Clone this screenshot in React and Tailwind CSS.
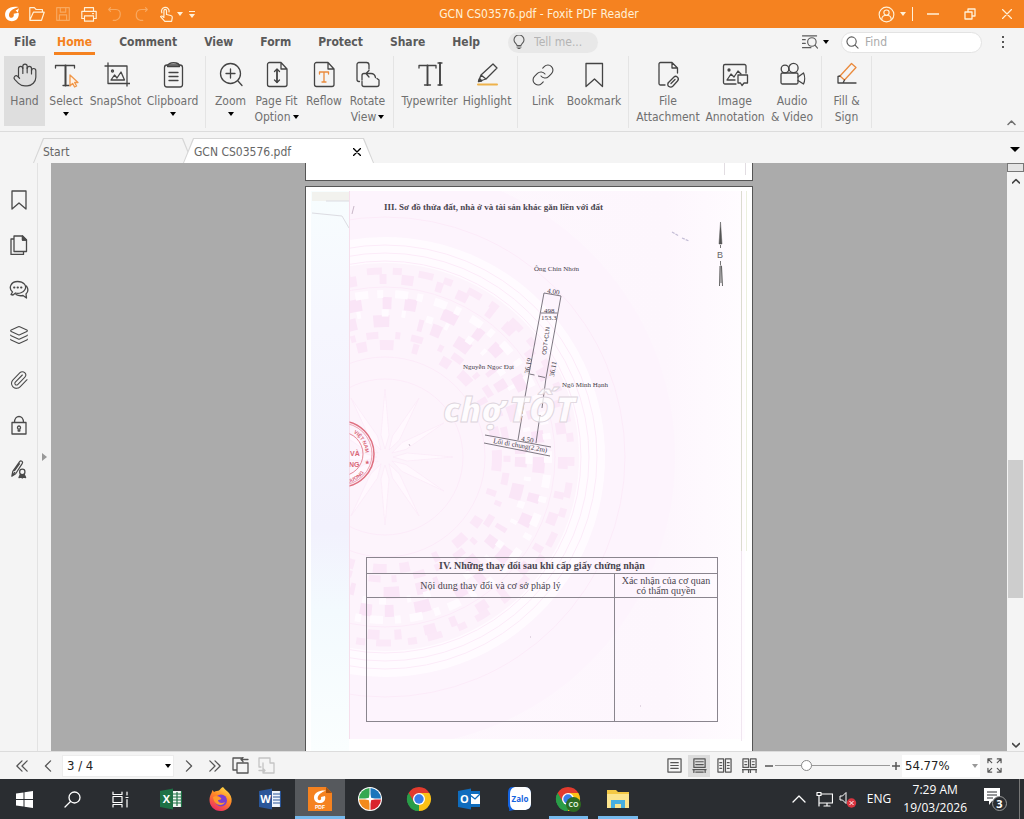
import { useState } from 'react';
import clsx from 'clsx';
import { Hand, Link as LinkIcon, Paperclip, Layers } from 'lucide-react';

function Icon({ size = 28, box = 28, width = 1.3, className, children }) {
  return (
    <svg width={size} height={size} viewBox={`0 0 ${box} ${box}`} fill="none" stroke="currentColor" strokeWidth={width} strokeLinecap="round" strokeLinejoin="round" className={clsx('shrink-0', className)} aria-hidden="true">
      {children}
    </svg>
  );
}

function Caret({ className }) {
  return (
    <svg width="6" height="4" viewBox="0 0 6 4" className={clsx('shrink-0', className)} fill="currentColor" aria-hidden="true">
      <path d="M0 0h6L3 4z" />
    </svg>
  );
}

/* ---------- title bar ---------- */

function FoxitMark({ className, size = 18 }) {
  return (
    <svg width={size} height={size} viewBox="0 0 18 18" fill="currentColor" className={className} aria-hidden="true">
      <path d="M16.5 1.2C12 .2 6.500.6 3.200 4.200.4 7.500.6 12.600 3.600 15.200c3.400 2.900 9 2.200 11.500-1.200 1.500-2.100 1.800-4.600 1.300-6.500l-5.600 1.200c.6 1.700.2 3.600-1.300 4.300-1.900.9-4-.4-3.900-2.800.2-4 4.200-7 10.900-9z" />
      <path d="M13 4.500c1.200.2 2.500-.6 3.600-2.300-.2 2.300-.6 4-1.300 5.300z" />
    </svg>
  );
}

const quickTools = [
  { name: 'Open', art: <path d="M2 17V3h5l2 2h7v3M2 17h13l3-9H6L2 17z" /> },
  { name: 'Save', faded: true, art: <path d="M3 3h14v14H3zM7 3v5h6V3M6 17v-6h8v6" /> },
  { name: 'Print', art: <path d="M5 7V3h10v4M5 15H2V7h16v8h-3M5 12h10v6H5zM14 9.500h1" /> },
  { name: 'Undo', faded: true, art: <path d="M5 3l-2 2 2 2M3 5h8c7 0 6 10 0 12H8" /> },
  { name: 'Redo', faded: true, art: <path d="M15 3l2 2-2 2M17 5h-6C3 5 3 15 9 17h3" /> },
];

function TitleBar() {
  return (
    <header className="flex h-7 shrink-0 items-center bg-[#f58220] text-[#fff1d8]">
      <div className="flex w-[200px] items-center pl-1">
        <FoxitMark size={16} className="mr-2 text-white" />
        {quickTools.map((tool) => (
          <button key={tool.name} aria-label={tool.name} className={clsx('mr-2', tool.faded && 'opacity-35')}>
            <Icon size={18} box={20} width={1.3}>{tool.art}</Icon>
          </button>
        ))}
        <button aria-label="Touch mode" className="flex items-center gap-[2px]">
          <Icon size={17} box={20} width={1.4}>
            <path d="M7 12V5.500a1.500 1.500 0 0 1 3 0V10l5 1.200c1.500.4 2 1.300 1.800 2.500L16 18H8l-5-5.500c.8-1.200 2-1 4 1M4.500 8A4.500 4.500 0 1 1 13 7" />
          </Icon>
          <Caret />
        </button>
        <button aria-label="Customize toolbar" className="ml-[6px] flex flex-col items-center gap-[2px]">
          <span className="h-px w-[6px] bg-current" />
          <Caret />
        </button>
      </div>
      <h1 className="flex-1 text-center text-xs">GCN CS03576.pdf - Foxit PDF Reader</h1>
      <div className="flex w-[146px] items-center justify-between pr-3">
        <button aria-label="Account" className="flex items-center gap-[5px]">
          <Icon size={17} box={18} width={1.2}>
            <circle cx="9" cy="9" r="7.800" />
            <circle cx="9" cy="7" r="2.800" />
            <path d="M4 14.500c0-3 2-4.500 3.500-4.500h3c1.500 0 3.500 1.500 3.500 4.500" />
          </Icon>
          <Caret />
        </button>
        <span className="-ml-2 h-[14px] w-px bg-current" />
        <button aria-label="Minimize"><Icon size={12} box={12} width={1.3}><path d="M0 6h12" /></Icon></button>
        <button aria-label="Restore" className="ml-3"><Icon size={12} box={12} width={1.3}><path d="M1 4h7v7H1zM4 4V1h7v7H8" /></Icon></button>
        <button aria-label="Close" className="ml-3"><Icon size={10} box={10} width={1.2}><path d="M.5.5l9 9M9.500.5l-9 9" /></Icon></button>
      </div>
    </header>
  );
}

/* ---------- menu row ---------- */

const menus = ['File', 'Home', 'Comment', 'View', 'Form', 'Protect', 'Share', 'Help'];

function MenuBar() {
  return (
    <nav className="flex h-7 shrink-0 items-center pl-[11px] text-[#5a5a5a]">
      {menus.map((menu) => (
        <button key={menu} className={clsx('border-b-[3px] px-[3px] pt-[3px] text-xs font-bold leading-5', menu === 'File' ? 'mr-[15px]' : 'mr-[21px]', menu === 'Home' ? 'border-[#f58220] text-[#f58220]' : 'border-transparent')}>
          {menu}
        </button>
      ))}
      <label className="ml-1 flex h-[21px] w-[90px] items-center gap-2 rounded-full bg-[#e8e8e8] pl-1">
        <Icon size={14} box={14} width={1.1}>
          <path d="M5 10.500C5 9 2 8 2 5a5 5 0 0 1 10 0c0 3-3 4-3 5.500zM5 12h4M6 13.500h2" />
        </Icon>
        <input aria-label="Tell me" placeholder="Tell me..." className="w-full min-w-0 bg-transparent text-xs outline-none placeholder:text-[#b4b4b4]" />
      </label>
      <div className="ml-auto flex items-center">
        <button aria-label="Search options" className="mr-3 flex items-center gap-[5px]">
          <Icon size={16} box={17} width={1.2}>
            <path d="M.5 2h15M.5 6h3M.5 10h3M.5 14.500h9M14 12l2.500 3" />
            <circle cx="10.500" cy="8.500" r="4.500" />
          </Icon>
          <Caret className="text-black" />
        </button>
        <label className="flex h-[21px] w-[141px] items-center gap-[6px] rounded-full border border-[#e3e3e3] bg-white pl-1">
          <Icon size={13} box={14} width={1.200}>
            <circle cx="6" cy="6" r="5" />
            <path d="M9.800 9.800l3.200 3.200" />
          </Icon>
          <input aria-label="Find" placeholder="Find" className="w-full min-w-0 bg-transparent text-xs outline-none placeholder:text-[#aaa]" />
        </label>
        <button aria-label="More" className="mx-[18px] flex w-[6px] flex-col items-center gap-[3px]">
          <span className="h-[2px] w-[2px] bg-[#555]" />
          <span className="h-[2px] w-[2px] bg-[#555]" />
          <span className="h-[2px] w-[2px] bg-[#555]" />
        </button>
      </div>
    </nav>
  );
}

/* ---------- ribbon ---------- */

const pageWithFold = 'M18 1.500H6.500a2 2 0 0 0-2 2v20a2 2 0 0 0 2 2h15.500a2 2 0 0 0 2-2V8zM18 1.500V8h6';

const ribbon = [
  [
    { name: 'Hand', w: 'w-[41px]', active: true, icon: <Hand size={26} strokeWidth={1.1} className="my-px" /> },
    {
      name: 'Select', w: 'w-[42px]', caret: true,
      icon: (
        <Icon>
          <path d="M3.500 7V4.500h19V7M11 24.500h6" />
          <path d="M13.500 4.500v20" strokeWidth="2" />
          <path d="M18 14v11l2.600-2.600 2 3.600 2-1-2-3.500H26z" stroke="#f0974a" fill="#fff3e6" />
        </Icon>
      ),
    },
    {
      name: 'SnapShot', w: 'w-[57px]',
      icon: (
        <Icon>
          <path d="M3 5h22v20M6 2v20.500h22M9 19l3.500-5 2.500 3 4-6 3.500 8z" />
          <circle cx="10.500" cy="10" r="1" />
        </Icon>
      ),
    },
    {
      name: 'Clipboard', w: 'w-[57px]', caret: true,
      icon: (
        <Icon>
          <rect x="5.500" y="4" width="18" height="22" rx="2.500" />
          <path d="M8.500 5.500c0-5 12-5 12 0zM10 11.500h9M10 15.500h9M10 19.500h9" />
        </Icon>
      ),
    },
  ],
  [
    {
      name: 'Zoom', w: 'w-[41px]', caret: true,
      icon: (
        <Icon>
          <circle cx="13.500" cy="12.500" r="10" />
          <path d="M21 20l4 4.500M9 12.500h9M13.500 8v9" />
        </Icon>
      ),
    },
    {
      name: 'Page Fit', second: 'Option', w: 'w-[51px]', caretInline: true,
      icon: (
        <Icon>
          <path d={pageWithFold} />
          <path d="M14 9v12" strokeWidth="1.800" />
          <path d="M11.500 10.500L14 8l2.500 2.500M11.500 19l2.500 2.500 2.500-2.500" />
        </Icon>
      ),
    },
    {
      name: 'Reflow', w: 'w-[44px]',
      icon: (
        <Icon>
          <path d={pageWithFold} />
          <path d="M9.500 13v-2h9v2M14 11v10M12 21h4" stroke="#ea8a3c" />
        </Icon>
      ),
    },
    {
      name: 'Rotate', second: 'View', w: 'w-[43px]', caretInline: true,
      icon: (
        <Icon>
          <path d="M5.500 20.500H5a2 2 0 0 1-2-2V3.500a2 2 0 0 1 2-2h7.500c1.500 0 2.500 1 2.500 2.500v4" />
          <path d="M8 20.500v3a2 2 0 0 0 2 2h13a2 2 0 0 0 2-2V19l-2-1.500M8 19v-4.500a2 2 0 0 1 2-2h3M15 9.500l-3 3 3 3.500M12 12.500h5c3 0 4 1.500 4.500 4" />
        </Icon>
      ),
    },
  ],
  [
    {
      name: 'Typewriter', w: 'w-[63px]',
      icon: (
        <Icon>
          <path d="M3 7V4.500h17V7M8.500 24h6M22 2h4M22 24h4" />
          <path d="M11.500 4.500V24M24 2v22" strokeWidth="1.900" />
        </Icon>
      ),
    },
    {
      name: 'Highlight', w: 'w-[52px]',
      icon: (
        <Icon>
          <path d="M20 3l4 4L13 18l-5-4zM8 14l-2.500 6.500L13 18M6 19l3 .5" />
          <path d="M5.500 20.500l1-3 2 2.500z" fill="currentColor" />
          <path d="M5 23.500h19" stroke="#eeb24b" strokeWidth="2" />
        </Icon>
      ),
    },
  ],
  [
    { name: 'Link', w: 'w-[42px]', icon: <LinkIcon size={24} strokeWidth={1.1} className="my-[2px]" /> },
    { name: 'Bookmark', w: 'w-[60px]', icon: <Icon><path d="M6 2.500h16.500v23L14.500 18 6 25.500z" /></Icon> },
  ],
  [
    {
      name: 'File', second: 'Attachment', w: 'w-[70px]',
      icon: (
        <Icon>
          <path d="M11 24H6.500a1.500 1.500 0 0 1-1.500-1.500V3a1.500 1.500 0 0 1 1.500-1.500H18l5.500 5.500v5M18 1.500V7h5.500" />
          <path d="M14 22l6-6c2-2 6 1 3.500 4l-4.500 5c-2.500 2.500-7 0-4.500-3.500zM17 22.500l4-4" />
        </Icon>
      ),
    },
    {
      name: 'Image', second: 'Annotation', w: 'w-[64px]',
      icon: (
        <Icon>
          <path d="M15 23H4a1.500 1.500 0 0 1-1.500-1.500V5A1.500 1.500 0 0 1 4 3.500h19.500A1.500 1.500 0 0 1 25 5v7M6 19l4-6 3 3 4-6 3 3M6 19h8" />
          <circle cx="8" cy="9" r="1" fill="currentColor" />
          <path d="M17 14h9.500v8H23l-2 2.500L19.500 22H17z" />
        </Icon>
      ),
    },
    {
      name: 'Audio', second: '& Video', w: 'w-[50px]',
      icon: (
        <Icon>
          <circle cx="7" cy="8" r="3.800" />
          <circle cx="15.500" cy="7" r="4.600" />
          <rect x="3" y="12" width="17" height="11" rx="1.500" />
          <path d="M20 16l5.500-4c1.500 3 1.500 8 0 11L20 19.500" />
        </Icon>
      ),
    },
  ],
  [
    {
      name: 'Fill &', second: 'Sign', w: 'w-[41px]',
      icon: (
        <Icon>
          <path d="M18.500 2.500l4.500 4L11.500 19 7 15z" stroke="#ea8a3c" />
          <path d="M7 15l-2 .5V22h5l1.500-3M5 22h18" />
        </Icon>
      ),
    },
  ],
];

function RibbonButton({ item }) {
  return (
    <button className={clsx('flex h-[70px] flex-col items-center pt-[5px]', item.w, item.active && 'bg-[#dedede]')}>
      <span className="text-[#444]">{item.icon}</span>
      <span className="mt-1 whitespace-nowrap text-xs leading-4">{item.name}</span>
      {item.caret && <Caret className="mt-[3px] text-black" />}
      {item.second && (
        <span className="flex items-center gap-[2px] whitespace-nowrap text-xs leading-4">
          {item.second}
          {item.caretInline && <Caret className="text-black" />}
        </span>
      )}
    </button>
  );
}

function Ribbon() {
  return (
    <div className="flex h-[76px] shrink-0 items-start border-b border-[#dcdcdc] text-[#707070]">
      {ribbon.map((group) => (
        <div key={group[0].name} className="flex h-[72px] border-r border-[#e4e4e4] px-1">
          {group.map((item) => <RibbonButton key={item.name} item={item} />)}
        </div>
      ))}
      <button aria-label="Collapse ribbon" className="ml-auto mr-2 self-end pb-1">
        <Icon size={9} box={9} width={1.500}><path d="M1 6.500L4.500 3 8 6.500" /></Icon>
      </button>
    </div>
  );
}

/* ---------- document tabs ---------- */

const slant = '[clip-path:polygon(10px_0,calc(100%-10px)_0,100%_100%,0_100%)]';

function DocumentTabs() {
  return (
    <div className="flex h-[31px] shrink-0 items-end justify-between pl-[33px] text-xs text-[#666]">
      <div className="flex h-[25px]">
        <div className={clsx('w-[160px] bg-[#d6d6d6] px-px pt-px', slant)}>
          <button className={clsx('h-full w-full bg-[#f4f4f4] pl-[9px] pt-[2px] text-left', slant)}>Start</button>
        </div>
        <div className={clsx('-ml-[10px] w-[191px] bg-[#d6d6d6] px-px pt-px', slant)}>
          <div className={clsx('flex h-full items-center justify-between bg-white pl-[10px] pr-3 pt-[2px]', slant)}>
            <button>GCN CS03576.pdf</button>
            <button aria-label="Close tab" className="text-black">
              <Icon size={8} box={8} width={1.400}><path d="M.5.5l7 7M7.500.5l-7 7" /></Icon>
            </button>
          </div>
        </div>
      </div>
      <button aria-label="Tab list" className="self-center pr-1 pt-1 text-black">
        <svg width="10" height="5" viewBox="0 0 10 5" fill="currentColor"><path d="M0 0h10L5 5z" /></svg>
      </button>
    </div>
  );
}

/* ---------- side panel ---------- */

const panels = [
  { name: 'Bookmarks', icon: <Icon size={20} box={20}><path d="M3 1h14v18l-7-6-7 6z" /></Icon> },
  {
    name: 'Pages',
    icon: (
      <Icon size={20} box={20}>
        <path d="M5 1h8.500l4 4v11.500H5zM13.500 1v4h4M5 4H2v15.500h12.500v-3" />
        <path d="M13.500 1v4h4z" fill="currentColor" />
      </Icon>
    ),
  },
  {
    name: 'Comments',
    icon: (
      <Icon size={20} box={20}>
        <path d="M2 14.500l1.500-2.500C-1 8 2 1.500 8.500 1.500S18 6 16 9.500c-1.500 3-6 4.500-9.500 3.500L4 15zM17.500 6c2 3 1.500 6-.5 8l.5 4-3.500-2.500c-2.500.5-5 .2-7-1" />
        <path d="M5 7.500h.5M8.500 7.500h.5M12 7.500h.5" strokeWidth="1.800" />
      </Icon>
    ),
  },
  { name: 'Layers', icon: <Layers size={20} strokeWidth={1.3} /> },
  { name: 'Attachments', icon: <Paperclip size={20} strokeWidth={1.3} /> },
  {
    name: 'Security',
    icon: (
      <Icon size={20} box={20}>
        <path d="M3 7.500h14v11.500H3zM5.500 7.500c0-8 9-8 9 0" />
        <path d="M10 11a1.500 1.500 0 0 1 .8 2.800V16H9.200v-2.200A1.500 1.500 0 0 1 10 11z" />
      </Icon>
    ),
  },
  {
    name: 'Signatures',
    icon: (
      <Icon size={19} box={20}>
        <path d="M3 17l1-5L11 2c1.500-2 4-.5 3 1.500L7 14.500zM6 11l5-7M3 17l3-4" />
        <circle cx="14" cy="12.500" r="2.800" />
        <path d="M12 15l-1.500 3.500 2-.5 1.500 1 1.500-1 2 .5L16 15" fill="currentColor" />
      </Icon>
    ),
  },
];

function SidePanel() {
  return (
    <>
      <aside className="flex w-[38px] shrink-0 flex-col border-r border-[#e2e2e2] pt-[14px] text-[#4a4a4a]">
        {panels.map((panel) => (
          <button key={panel.name} aria-label={panel.name} className="flex h-[45px] items-center justify-center">{panel.icon}</button>
        ))}
      </aside>
      <button aria-label="Expand panel" className="flex w-[13px] shrink-0 items-center justify-center text-[#999]">
        <svg width="5" height="8" viewBox="0 0 5 8" fill="currentColor"><path d="M0 0v8l5-4z" /></svg>
      </button>
    </>
  );
}

/* ---------- scanned page ---------- */

const rays = Array.from({ length: 12 }, (_, i) => i * 30);

// each ring of the drum: radius, thickness, dash rhythm, colour
const drums = [
  [112, 10, '14 19 6 25 10 13', '#fbe8f8'],
  [122, 7, '5 11 12 17', '#fbe8f8'],
  [136, 12, '10 17 16 29 5 9', '#fae6f7'],
  [144, 7, '7 13 4 21', '#fffbff'],
  [154, 12, '16 21 9 13 12 27', '#fae5f7'],
  [163, 8, '6 12 13 9', '#fffbff'],
  [178, 10, '12 23 7 15', '#fbe8f8'],
  [186, 7, '9 17 15 11', '#fbe9f8'],
];

// faint bronze-drum rosette printed under the certificate
function Rosette() {
  return (
    <g clipPath="url(#sheet)">
      <circle cx="385" cy="458" r="290" fill="#fdf4fd" />
      <circle cx="385" cy="458" r="220" fill="#fffbff" />
      <circle cx="385" cy="458" r="194" fill="#fdf4fc" />
      <g fill="none" stroke="#fcebf9" strokeWidth="1">
        <circle cx="385" cy="458" r="240" />
        <circle cx="385" cy="458" r="212" />
        <circle cx="385" cy="458" r="204" />
        <circle cx="385" cy="458" r="196" />
        <circle cx="385" cy="458" r="170" />
        <circle cx="385" cy="458" r="100" />
        <circle cx="385" cy="458" r="78" />
      </g>
      {drums.map(([r, thickness, dash, color]) => (
        <circle key={r} cx="385" cy="458" r={r} fill="none" stroke={color} strokeWidth={thickness} strokeDasharray={dash} />
      ))}
      {rays.map((angle) => (
        <path key={angle} d="M385 450l-4-14 4-46 4 46z" fill="#fff8fe" stroke="#fbeaf8" strokeWidth="0.700" transform={`rotate(${angle} 385 458)`} />
      ))}
    </g>
  );
}

function Stamp() {
  return (
    <g clipPath="url(#sheet)" fill="none" stroke="#df7080">
      <circle cx="341" cy="455" r="33" strokeWidth="1.500" />
      <circle cx="341" cy="455" r="31" strokeWidth="0.600" />
      <circle cx="341" cy="455" r="22" strokeWidth="0.800" />
      <path id="stampTop" d="M341 430.500a24.500 24.500 0 0 1 24.500 24.500" stroke="none" />
      <path id="stampBottom" d="M346 484.500a30 30 0 0 0 23-20" stroke="none" />
      <g fill="#d96475" stroke="none" fontFamily="Liberation Sans, sans-serif" fontWeight="bold">
        <text fontSize="5"><textPath href="#stampTop" startOffset="13">VIỆT NAM</textPath></text>
        <text fontSize="5"><textPath href="#stampBottom" startOffset="2">DƯƠNG</textPath></text>
        <text x="350" y="457" fontSize="7">VÀ</text>
        <text x="349" y="468" fontSize="7">NG</text>
        <text x="365" y="465" fontSize="5">★</text>
      </g>
    </g>
  );
}

function ScanDrawing() {
  return (
    <svg viewBox="306 188 446 600" width="446" height="600" className="col-start-1 row-start-1" role="img" aria-label="Sơ đồ thửa đất">
      <defs>
        <clipPath id="sheet"><rect x="349.500" y="192" width="395" height="548" /></clipPath>
        <linearGradient id="strip" x1="0" y1="0" x2="0" y2="1">
          <stop offset="0" stopColor="#f7fdfe" />
          <stop offset="0.250" stopColor="#f6f6fe" />
          <stop offset="0.600" stopColor="#f2f1fd" />
          <stop offset="0.750" stopColor="#f3fafe" />
          <stop offset="1" stopColor="#fafefe" />
        </linearGradient>
        <linearGradient id="paper" x1="0" y1="0" x2="1" y2="0">
          <stop offset="0" stopColor="#fef8fe" />
          <stop offset="0.800" stopColor="#fdf6fd" />
          <stop offset="1" stopColor="#fffcff" />
        </linearGradient>
      </defs>
      <rect x="311" y="192" width="38" height="560" fill="url(#strip)" />
      <rect x="312" y="193" width="37" height="9" fill="#f2f2ee" />
      <path d="M326 202h23M312 214l30 3 7 12" stroke="#dcdce2" fill="none" />
      <rect x="349" y="192" width="396" height="548" fill="url(#paper)" />
      <Rosette />
      <path d="M349.500 192v548" stroke="#f6dfec" />
      <path d="M741.500 192v360" stroke="#dcdcd0" />
      <path d="M746.500 192v360" stroke="#ecefdf" />
      <path d="M741.500 552v190" stroke="#f0e6f0" />
      <Stamp />

      {/* north arrow */}
      <g stroke="#555" fill="#555">
        <path d="M720.500 223l1.500 22h-3z" strokeWidth="0.500" />
        <path d="M720.500 246v3M720.500 262v4" strokeWidth="0.800" />
        <path d="M719.500 287l.5-20h1.500l1 20M721 268v16" fill="none" strokeWidth="0.900" />
      </g>
      <text x="717" y="259" fontSize="9" fill="#666" fontFamily="Liberation Sans, sans-serif">B</text>
      <path d="M672 233l7 4M682 239l7 3" stroke="#c4bdd6" strokeWidth="1.300" strokeDasharray="3 1" />
      <path d="M409 445l1 2M530 638h1M640 707h1M352 215l2-8" stroke="#c9b8c9" />

      {/* the plot itself */}
      <g stroke="#6f6a74" strokeWidth="0.900" fill="none">
        <path d="M544 294l17 3-15 82M544 294l-15 81-7 40M518 441l4-24M536 444l4-28M546 379l-4 30M541 314h16.500M529.500 375l5 1M538 377l7 1.500" />
        <path d="M485 436l66 12M484 444l66 13" />
      </g>

      {/* watermark */}
      <g fill="#fff" fillOpacity="0.750" stroke="#ddd5dd" strokeWidth="0.900" fontFamily="Open Sans, sans-serif" fontWeight="800" fontStyle="italic">
        <text x="443" y="423" fontSize="34">chợ</text>
        <text x="509" y="423" fontSize="36">TỐT</text>
      </g>

      <g fill="#45404a" fontFamily="Liberation Serif, serif" fontSize="7">
        <text x="534" y="272">Ông Chín Nhơn</text>
        <text x="463" y="370">Nguyễn Ngọc Đạt</text>
        <text x="562" y="388">Ngô Minh Hạnh</text>
        <text x="547" y="294" transform="rotate(8 547 294)" fontSize="7">4.00</text>
        <text x="544" y="314">498</text>
        <text x="541" y="321">153.3</text>
        <text transform="translate(546 356) rotate(-82)" fontFamily="Liberation Sans, sans-serif" fontSize="6">ODT+CLN</text>
        <text transform="translate(529 375) rotate(-80)" fontSize="7">36.19</text>
        <text transform="translate(554 378) rotate(-80)" fontSize="7">36.11</text>
        <text x="521" y="442" transform="rotate(8 521 442)" fontSize="7">4.50</text>
        <text x="493" y="444" transform="rotate(10 493 444)">Lối đi chung(2.2m)</text>
      </g>
    </svg>
  );
}

function ScannedPage() {
  return (
    <article className="grid w-[448px] shrink-0 border border-[#555] bg-white font-['Liberation_Serif',serif] text-[#4a4650]">
      <ScanDrawing />
      <div className="col-start-1 row-start-1 flex flex-col pl-[60px] pr-[34px]">
        <h2 className="ml-[18px] mt-[14px] whitespace-nowrap text-[9px] font-bold leading-3">III. Sơ đồ thửa đất, nhà ở và tài sản khác gắn liền với đất</h2>
        <table className="mt-[344px] w-full table-fixed border-collapse border border-[#8a858e] text-center text-[10px] leading-[10px]">
          <colgroup>
            <col className="w-[248px]" />
            <col />
          </colgroup>
          <thead>
            <tr className="h-4">
              <th colSpan={2} className="border border-[#8a858e] p-0">IV. Những thay đổi sau khi cấp giấy chứng nhận</th>
            </tr>
            <tr className="h-6">
              <th className="border border-[#8a858e] p-0 font-normal">Nội dung thay đổi và cơ sở pháp lý</th>
              <th className="border border-[#8a858e] p-0 font-normal">Xác nhận của cơ quan<br />có thẩm quyền</th>
            </tr>
          </thead>
          <tbody>
            <tr className="h-[124px]">
              <td className="border border-[#8a858e]" />
              <td className="border border-[#8a858e]" />
            </tr>
          </tbody>
        </table>
      </div>
    </article>
  );
}

function Viewer() {
  return (
    <main className="flex min-w-0 flex-1 flex-col items-center gap-[5px] overflow-hidden bg-[#ababab]">
      <div className="flex h-[18px] w-[448px] shrink-0 justify-end gap-5 border border-t-0 border-[#555] bg-white pr-[6px]">
        <span className="h-3 w-px bg-[#e2dde2]" />
        <span className="h-3 w-px bg-[#e2dde2]" />
      </div>
      <ScannedPage />
    </main>
  );
}

function ScrollBar() {
  return (
    <div className="flex w-[17px] shrink-0 flex-col items-center text-[#444]">
      <div className="h-[9px] w-full border border-[#777] bg-[#e4e4e4]" />
      <button aria-label="Scroll up" className="flex h-[17px] items-center">
        <Icon size={8} box={8} width={1.600}><path d="M.5 6L4 2.500 7.500 6" /></Icon>
      </button>
      <div className="flex-[270]" />
      <div className="w-[15px] flex-[138] bg-[#cdcdcd]" />
      <div className="flex-[140]" />
      <button aria-label="Scroll down" className="flex h-3 items-center">
        <Icon size={8} box={8} width={1.600}><path d="M.5 2.500L4 6l3.500-3.500" /></Icon>
      </button>
    </div>
  );
}

/* ---------- status bar ---------- */

const pagers = {
  first: 'M7 1L1 7l6 6M13 1L7 7l6 6',
  prev: 'M10 1L4 7l6 6',
  next: 'M4 1l6 6-6 6',
  last: 'M1 1l6 6-6 6M7 1l6 6-6 6',
};

function PagerButton({ kind }) {
  return (
    <button aria-label={`${kind} page`} className="flex w-[26px] justify-center">
      <Icon size={12} box={14} width={1.500}><path d={pagers[kind]} /></Icon>
    </button>
  );
}

const layouts = [
  { name: 'Single page', d: 'M1 1h14v14H1zM4 5h8M4 8h8M4 11h8' },
  { name: 'Continuous', active: true, d: 'M2 1h12v9H2zM4 4h8M4 7h8M1 12.500h14M2 15.500v-3M14 15.500v-3M4 15h8' },
  { name: 'Facing', d: 'M1 1h6v14H1zM9 1h6v14H9zM3 5h2M3 8h2M3 11h2M11 5h2M11 8h2M11 11h2' },
  { name: 'Continuous facing', d: 'M1 1h6v9H1zM9 1h6v9H9zM3 4h2M3 7h2M11 4h2M11 7h2M0 12.500h7.500M8.500 12.500H16M1 15.500v-3M7 15.500v-3M9 15.500v-3M15 15.500v-3' },
];

function StatusBar() {
  const [zoom, setZoom] = useState(25);

  return (
    <footer className="flex h-7 shrink-0 items-center border-t border-[#dcdcdc] pl-[9px] pr-[22px] text-[#555]">
      <PagerButton kind="first" />
      <PagerButton kind="prev" />
      <div className="ml-px mr-[2px] grid h-[22px] w-[112px] items-center border border-[#ececec] bg-white">
        <select aria-label="Page" className="col-start-1 row-start-1 w-full appearance-none pl-1 text-[13px] text-[#222] outline-none">
          <option>3 / 4</option>
        </select>
        <Caret className="col-start-1 row-start-1 mr-[2px] justify-self-end text-black" />
      </div>
      <PagerButton kind="next" />
      <PagerButton kind="last" />
      <button aria-label="Previous view" className="ml-1">
        <Icon size={18} box={18}><path d="M5 13H1V1h9M5 6h11v10H5zM16 2.500H9M11 .5L9 2.500l2 2" /></Icon>
      </button>
      <button aria-label="Next view" className="ml-2 text-[#c4c4c4]">
        <Icon size={18} box={18}><path d="M5 6V16h11V6H12M12 6V1H1v9h2M1 13.500h6M5 11.500l2 2-2 2" /></Icon>
      </button>

      <div className="ml-auto flex items-center">
        {layouts.map((layout) => (
          <button key={layout.name} aria-label={layout.name} className={clsx('mr-[3px] flex h-[22px] w-[22px] items-center justify-center', layout.active && 'bg-[#dcdcdc]')}>
            <Icon size={15} box={16} width={1.300}><path d={layout.d} /></Icon>
          </button>
        ))}
        <button aria-label="Zoom out" className="ml-px flex w-[9px] justify-center"><Icon size={8} box={8} width={1.500}><path d="M0 4h8" /></Icon></button>
        <input
          type="range"
          aria-label="Zoom"
          value={zoom}
          onChange={(e) => setZoom(Number(e.target.value))}
          className="mx-[2px] h-3 w-[115px] appearance-none bg-transparent [&::-webkit-slider-runnable-track]:h-px [&::-webkit-slider-runnable-track]:bg-[#999] [&::-webkit-slider-thumb]:-mt-[5px] [&::-webkit-slider-thumb]:h-[11px] [&::-webkit-slider-thumb]:w-[11px] [&::-webkit-slider-thumb]:appearance-none [&::-webkit-slider-thumb]:rounded-full [&::-webkit-slider-thumb]:border [&::-webkit-slider-thumb]:border-[#888] [&::-webkit-slider-thumb]:bg-white"
        />
        <button aria-label="Zoom in" className="mr-[2px]"><Icon size={8} box={8} width={1.500}><path d="M0 4h8M4 0v8" /></Icon></button>
        <div className="mr-[7px] grid h-[22px] w-[78px] items-center bg-white">
          <select aria-label="Zoom level" className="col-start-1 row-start-1 w-full appearance-none pl-[3px] text-[13px] text-[#222] outline-none">
            <option>54.77%</option>
          </select>
          <Caret className="col-start-1 row-start-1 mr-[2px] justify-self-end text-[#999]" />
        </div>
        <button aria-label="Full screen">
          <Icon size={15} box={16}><path d="M1 5V1h4M1 1l4 4M11 1h4v4M15 1l-4 4M1 11v4h4M1 15l4-4M15 11v4h-4M15 15l-4-4" /></Icon>
        </button>
      </div>
    </footer>
  );
}

/* ---------- taskbar ---------- */

function ChromeLogo({ badge }) {
  return (
    <svg width="26" height="26" viewBox="0 0 26 26" aria-hidden="true">
      <path d="M13 13L2.600 7A12 12 0 0 1 23.400 7z" fill="#e33b2e" />
      <path d="M13 13L23.400 7A12 12 0 0 1 13 25z" fill="#fbc116" />
      <path d="M13 13v12A12 12 0 0 1 2.600 7z" fill="#2a9d48" />
      <path d="M13 7h10.400L18 16z" fill="#fbc116" />
      <path d="M13 7h10.400L2.600 7l5 9z" fill="#e33b2e" />
      <path d="M2.600 7l5.200 9 5 3L13 25A12 12 0 0 1 2.600 7z" fill="#2a9d48" />
      <circle cx="13" cy="13" r="6" fill="#fff" />
      <circle cx="13" cy="13" r="4.700" fill="#3a7de8" />
      {badge && (
        <>
          <circle cx="18.500" cy="18.500" r="7.500" fill="#2e6b22" />
          <text x="18.500" y="21" fontSize="7" textAnchor="middle" fill="#dfeedd" fontWeight="bold" fontFamily="Open Sans, sans-serif">CO</text>
        </>
      )}
    </svg>
  );
}

function OfficeLogo({ letter, dark, light, children }) {
  return (
    <svg width="22" height="22" viewBox="0 0 22 22" aria-hidden="true">
      <rect x="11" y="3" width="11" height="16" fill={light} />
      {children}
      <path d="M0 3l13-2.500v21L0 19z" fill={dark} />
      <text x="6.500" y="15" fontSize="11" textAnchor="middle" fontWeight="bold" fill="#fff" fontFamily="Open Sans, sans-serif">{letter}</text>
    </svg>
  );
}

const apps = [
  { name: 'Excel', icon: <OfficeLogo letter="X" dark="#1e7145" light="#f1f8f3"><path d="M13 6h8M13 9h8M13 12h8M13 15h8M17 4v14M21.500 3v16" stroke="#1e7145" strokeWidth="1.200" /></OfficeLogo> },
  {
    name: 'Firefox',
    icon: (
      <svg width="24" height="24" viewBox="0 0 24 24" aria-hidden="true">
        <defs>
          <linearGradient id="fox" x1="0.800" y1="0" x2="0.300" y2="1">
            <stop offset="0" stopColor="#ffe14a" />
            <stop offset="0.450" stopColor="#ff8a26" />
            <stop offset="1" stopColor="#ee2a63" />
          </linearGradient>
        </defs>
        <path d="M14 0c2 3 4 3.500 6 6 3 4 3.500 8 1.500 12-2 4-6 6-10 6C5 24 .5 19 .5 13c0-3 .8-5 2-7l1-3 1.500 2c2-1.500 4-1 5-1.500C11 2.500 12 1 14 0z" fill="url(#fox)" />
        <circle cx="12" cy="13.500" r="6" fill="#7b3fd0" />
        <path d="M4 10c3-2 6-1 8 1 1 1-1 2-3 2 0 3 4 4 7 2-2 5-11 4-12-5z" fill="#ff9a2b" />
      </svg>
    ),
  },
  { name: 'Word', icon: <OfficeLogo letter="W" dark="#2a5699" light="#f0f5fc"><path d="M14 6h7M14 9h7M14 12h7M14 15h7M21.500 3v16" stroke="#2a5699" strokeWidth="1.200" /></OfficeLogo> },
  {
    name: 'Foxit PDF Reader', active: true, open: true,
    icon: (
      <svg width="24" height="24" viewBox="0 0 24 24" aria-hidden="true">
        <path d="M0 0h18l6 6v18H0z" fill="#f58220" />
        <path d="M18 0v6h6z" fill="#a65310" />
        <path d="M18 3.500C12 3 6 5 6 10.500c0 4 3.500 6 7 5.500 3.500-.6 5-4 4-7l-4 1c.6 2-.4 3.300-1.500 3.300-1.200 0-2-1-1.800-2.500C10 8 13 5.500 18 3.500z" fill="#fff" />
        <text x="12" y="22" fontSize="5" textAnchor="middle" fontWeight="bold" fill="#fff" fontFamily="Liberation Sans, sans-serif">PDF</text>
      </svg>
    ),
  },
  {
    name: 'Remote support',
    icon: (
      <svg width="24" height="24" viewBox="0 0 24 24" aria-hidden="true">
        <circle cx="12" cy="12" r="12" fill="#fff" />
        <path d="M11.500 1v10.500H1A11 11 0 0 1 11.500 1z" fill="#36a852" />
        <path d="M12.500 1A11 11 0 0 1 23 11.500H12.500z" fill="#1b75bb" />
        <path d="M1 12.500h10.500V23A11 11 0 0 1 1 12.500z" fill="#f28a1c" />
        <path d="M12.500 12.500H23A11 11 0 0 1 12.500 23z" fill="#d9232e" />
        <path d="M12 7l1.200 3.800L17 12l-3.800 1.200L12 17l-1.200-3.800L7 12l3.800-1.200z" fill="#fff" />
      </svg>
    ),
  },
  { name: 'Chrome', icon: <ChromeLogo /> },
  { name: 'Outlook', icon: <OfficeLogo letter="O" dark="#0f6cbd" light="#0f6cbd"><path d="M12 6h10v10H12z" fill="#fff" /><path d="M12 7l5 4 5-5" stroke="#0f6cbd" strokeWidth="1.300" fill="none" /></OfficeLogo> },
  {
    name: 'Zalo',
    icon: (
      <svg width="26" height="26" viewBox="0 0 26 26" aria-hidden="true">
        <path d="M6 1h12c5 0 7 3 7 7v9c0 5-3 7-7 7H8l-5 1c1-1 0-3-1-5V8c0-4 1-7 4-7z" fill="#1463e0" />
        <path d="M9 1h10c4 0 6 3 6 7v9c0 5-3 7-7 7H9c-4-1-5-4-5-8V8c0-3 1-6 5-7z" fill="#fff" />
        <text x="14" y="15.500" fontSize="8" textAnchor="middle" fontWeight="bold" fill="#1463e0" fontFamily="Open Sans, sans-serif">Zalo</text>
      </svg>
    ),
  },
  { name: 'Chrome profile', open: true, icon: <ChromeLogo badge /> },
  {
    name: 'File Explorer', open: true,
    icon: (
      <svg width="24" height="22" viewBox="0 0 24 22" aria-hidden="true">
        <path d="M1 2h9l2 2h11v16H1z" fill="#f3c845" />
        <path d="M1 6h22v14H1z" fill="#fbe48e" />
        <path d="M5 12h14v8h-4v-4H9v4H5z" fill="#47aee0" />
      </svg>
    ),
  },
];

function Taskbar() {
  return (
    <div className="flex h-10 shrink-0 items-stretch bg-[#2a2d31] font-['Open_Sans',sans-serif] text-white">
      <button aria-label="Start menu" className="flex w-12 items-center justify-center">
        <svg width="17" height="17" viewBox="0 0 17 17" fill="#fff"><path d="M0 2.500l7.500-1V8H0zM8.500 1.300L17 0v8H8.500zM0 9h7.500v6.500l-7.500-1zM8.500 9H17v8l-8.500-1.300z" /></svg>
      </button>
      <button aria-label="Search" className="flex w-12 items-center justify-center">
        <Icon size={17} box={17}><circle cx="10.500" cy="6.500" r="5.500" /><path d="M6.500 10.500L1 16" /></Icon>
      </button>
      <button aria-label="Task view" className="flex w-12 items-center justify-center">
        <Icon size={17} box={17} width={1.200}><path d="M1 1v2.500h9V1M1 16v-2.500h9V16M1 5.500h9v6H1zM15 1v3M15 8.500V16M14 6.500h2" /></Icon>
      </button>
      <div className="ml-[2px] grid w-[497px] grid-cols-10">
        {apps.map((app) => (
          <button key={app.name} aria-label={app.name} className={clsx('flex items-center justify-center', app.active && 'bg-[#56595d]', app.open && 'pt-[3px]', app.open && !app.active && 'px-[5px]')}>
            <span className={clsx('flex h-full w-full items-center justify-center', app.open && 'border-b-[3px] border-[#76b9ed]')}>{app.icon}</span>
          </button>
        ))}
      </div>
      <div className="ml-auto flex items-center text-xs leading-[18px]">
        <button aria-label="Hidden icons" className="mr-[10px]"><Icon size={14} box={14}><path d="M1 10l6-6 6 6" /></Icon></button>
        <button aria-label="Network" className="mr-[6px]">
          <Icon size={17} box={17} width={1.200}><path d="M5 3h11.500v9H4M8 15h6M11 12v3M1 1.500h4v3H1zM3 4.500V15" /></Icon>
        </button>
        <button aria-label="Sound muted" className="mr-[10px]">
          <svg width="18" height="18" viewBox="0 0 18 18" fill="none" stroke="#fff" aria-hidden="true">
            <path d="M1 6h2.500L7 2.500v11L3.500 10H1z" />
            <circle cx="12.500" cy="13" r="4.700" fill="#d93540" stroke="none" />
            <path d="M10.500 11l4 4M14.500 11l-4 4" />
          </svg>
        </button>
        <span className="mr-3">ENG</span>
        <button className="mr-4 text-center">7:29 AM<br />19/03/2026</button>
        <button aria-label="Notifications" className="mr-[10px]">
          <svg width="26" height="24" viewBox="0 0 26 24" aria-hidden="true">
            <path d="M1 1h16v13H9l-3 4v-4H1z" fill="#fff" />
            <path d="M4 5h10M4 8h10M4 11h6" stroke="#2a2d31" />
            <circle cx="16.500" cy="16.500" r="7" fill="#2a2d31" stroke="#999" />
            <text x="16.500" y="20.500" fontSize="11" textAnchor="middle" fontWeight="bold" fill="#fff" fontFamily="Open Sans, sans-serif">3</text>
          </svg>
        </button>
        <span className="mr-1 h-10 w-px bg-[#777]" />
      </div>
    </div>
  );
}

export default function App() {
  return (
    <div className="flex h-screen flex-col overflow-hidden bg-[#f4f4f4] font-['DejaVu_Sans_Condensed','Noto_Sans',sans-serif]">
      <TitleBar />
      <MenuBar />
      <Ribbon />
      <DocumentTabs />
      <div className="flex min-h-0 flex-1">
        <SidePanel />
        <Viewer />
        <ScrollBar />
      </div>
      <StatusBar />
      <Taskbar />
    </div>
  );
}
